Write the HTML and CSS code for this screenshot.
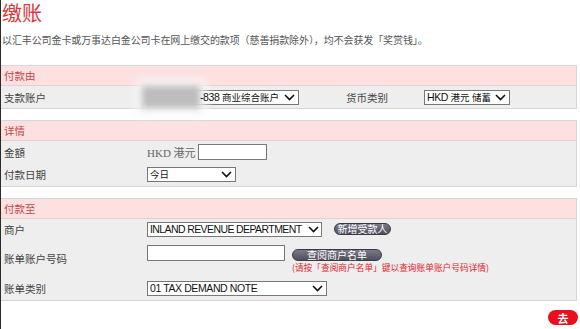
FILE: index.html
```html
<!DOCTYPE html>
<html lang="zh-CN">
<head>
<meta charset="utf-8">
<title>缴账</title>
<link rel="stylesheet" href="styles.css">
</head>
<body>
<div class="page">
  <h1 class="title">缴账</h1>
  <p class="intro">以汇丰公司金卡或万事达白金公司卡在网上缴交的款项（慈善捐款除外），均不会获发「奖赏钱」。</p>

  <section class="panel">
    <div class="panel-head">付款由</div>
    <div class="panel-body body-from">
      <div class="field">
        <span class="label">支款账户</span>
        <div class="select sel-account">
          <span class="masked"></span>
          <span class="sel-text">-838 <span class="cjk">商业综合账户</span></span>
          <svg class="chev" viewBox="0 0 11 7" width="11" height="7"><path d="M1 1 L5.5 5.5 L10 1" fill="none" stroke="#111" stroke-width="1.6"/></svg>
        </div>
        <span class="label label-currency">货币类别</span>
        <div class="select sel-currency">
          <span class="sel-text">HKD <span class="cjk">港元</span> <span class="cjk">储蓄</span></span>
          <svg class="chev" viewBox="0 0 11 7" width="11" height="7"><path d="M1 1 L5.5 5.5 L10 1" fill="none" stroke="#111" stroke-width="1.6"/></svg>
        </div>
      </div>
    </div>
  </section>

  <section class="panel">
    <div class="panel-head">详情</div>
    <div class="panel-body body-detail">
      <div class="field">
        <span class="label">金額</span>
        <span class="ccy">HKD 港元</span>
        <span class="input input-amount"></span>
      </div>
      <div class="field">
        <span class="label">付款日期</span>
        <div class="select sel-date">
          <span class="sel-text"><span class="cjk">今日</span></span>
          <svg class="chev" viewBox="0 0 11 7" width="11" height="7"><path d="M1 1 L5.5 5.5 L10 1" fill="none" stroke="#111" stroke-width="1.6"/></svg>
        </div>
      </div>
    </div>
  </section>

  <section class="panel">
    <div class="panel-head">付款至</div>
    <div class="panel-body body-to">
      <div class="field f-merchant">
        <span class="label">商户</span>
        <div class="select sel-merchant">
          <span class="sel-text">INLAND REVENUE DEPARTMENT</span>
          <svg class="chev" viewBox="0 0 11 7" width="11" height="7"><path d="M1 1 L5.5 5.5 L10 1" fill="none" stroke="#111" stroke-width="1.6"/></svg>
        </div>
        <span class="btn btn-dark btn-add">新增受款人</span>
      </div>
      <div class="field f-bill">
        <span class="label">账单账户号码</span>
        <div class="ctrl-stack">
          <div class="ctrl-line">
            <span class="input input-bill"></span>
            <span class="btn btn-dark btn-list">查阅商户名单</span>
          </div>
          <p class="hint">(请按「查阅商户名单」键以查询账单账户号码详情)</p>
        </div>
      </div>
      <div class="field f-type">
        <span class="label">账单类别</span>
        <div class="select sel-type">
          <span class="sel-text">01 TAX DEMAND NOTE</span>
          <svg class="chev" viewBox="0 0 11 7" width="11" height="7"><path d="M1 1 L5.5 5.5 L10 1" fill="none" stroke="#111" stroke-width="1.6"/></svg>
        </div>
      </div>
    </div>
  </section>

  <div class="actions">
    <span class="btn btn-go">去</span>
  </div>
</div>
</body>
</html>
```

FILE: styles.css
```css
html, body {
  margin: 0;
  padding: 0;
  background: #fff;
}
body {
  font-family: "Noto Sans CJK SC", "Liberation Sans", sans-serif;
  color: #444;
}
.page {
  border-left: 1px solid #2b2b2b;
  min-height: 329px;
  box-sizing: border-box;
  width: 577px;
}
.title {
  margin: 0;
  padding: 0 4px 0 1px;
  font-size: 20px;
  line-height: 26px;
  font-weight: normal;
  color: #e2343b;
}
.intro {
  margin: 7px 0 0 1px;
  font-size: 10px;
  line-height: 14px;
  color: #555;
  letter-spacing: -0.1px;
}
.panel {
  border: 1px solid #d6d6d6;
  border-left: none;
  margin-top: 11px;
}
.intro + .panel {
  margin-top: 18px;
}
.panel-head {
  height: 19px;
  line-height: 19px;
  background: #fde0e0;
  border-bottom: 1px solid #e7cfcf;
  color: #c44848;
  font-size: 10.5px;
  padding-left: 3px;
}
.panel-body {
  background: #eeeeee;
  padding-left: 3px;
}
.field {
  display: flex;
  align-items: center;
  font-size: 10.5px;
}
.label {
  width: 143px;
  flex: none;
  color: #444;
}
.body-from .field { height: 22px; }
.label-currency {
  width: auto;
  margin-left: 47px;
  margin-right: 36px;
}
.body-detail { padding-bottom: 1px; }
.body-detail .field { height: 22px; }
.body-to { padding-bottom: 2px; }
.f-merchant { height: 20px; }
.f-bill { margin-top: 4px; height: 31px; }
.f-type { margin-top: 4px; height: 20px; }

.select {
  box-sizing: border-box;
  height: 15px;
  background: #fff;
  border: 1px solid #777;
  display: flex;
  align-items: center;
  font-family: "Liberation Sans", "Noto Sans CJK SC", sans-serif;
  font-size: 10.5px;
  letter-spacing: -0.4px;
  color: #111;
  padding: 0 3px 0 2px;
  position: relative;
}
.sel-text {
  flex: 1;
  white-space: nowrap;
  line-height: 13px;
}
.cjk {
  font-family: "Noto Sans CJK SC", sans-serif;
  font-size: 9.5px;
  letter-spacing: 0;
}
.chev { flex: none; margin-left: 3px; }
.sel-account { width: 152px; padding-left: 0; }
.masked {
  width: 58px;
  height: 22px;
  margin-left: -6px;
  background: #bdbdbd;
  filter: blur(3px);
  box-shadow: 0 0 8px 6px #f7f7f7;
  flex: none;
}
.sel-account .sel-text { position: relative; }
.sel-currency { width: 86px; }
.sel-date { width: 89px; }
.sel-merchant { width: 175px; letter-spacing: -0.6px; padding-right: 2px; }
.sel-merchant .chev { margin-left: 2px; }
.sel-type { width: 180px; }

.ccy {
  font-family: "Liberation Serif", "Noto Sans CJK SC", serif;
  color: #666;
  font-size: 11px;
  margin-right: 2px;
}
.input {
  display: block;
  box-sizing: border-box;
  height: 16px;
  background: #fff;
  border: 1px solid #777;
}
.input-amount { width: 69px; }
.input-bill { width: 138px; }

.ctrl-stack {
  display: flex;
  flex-direction: column;
  padding-top: 1px;
}
.ctrl-line {
  display: flex;
  align-items: center;
  gap: 7px;
  height: 17px;
}
.hint {
  margin: 0 0 0 145px;
  font-size: 8.7px;
  line-height: 12px;
  color: #e0242c;
  white-space: nowrap;
}

.btn {
  display: inline-flex;
  align-items: center;
  justify-content: center;
  box-sizing: border-box;
  border-radius: 8px;
  color: #fff;
  white-space: nowrap;
}
.btn-dark {
  background: linear-gradient(#7a7a88, #4f4f5c);
  border: 1px solid #3a3a44;
  font-size: 10px;
  height: 12px;
  line-height: 10px;
}
.btn-add { width: 57px; margin-left: 12px; }
.btn-list { width: 90px; margin-top: 3px; }

.actions {
  display: flex;
  justify-content: flex-end;
  padding-top: 9px;
}
.btn-go {
  width: 30px;
  height: 15px;
  background: #e8101c;
  font-size: 11px;
  font-weight: bold;
  margin-right: -1px;
}
```
